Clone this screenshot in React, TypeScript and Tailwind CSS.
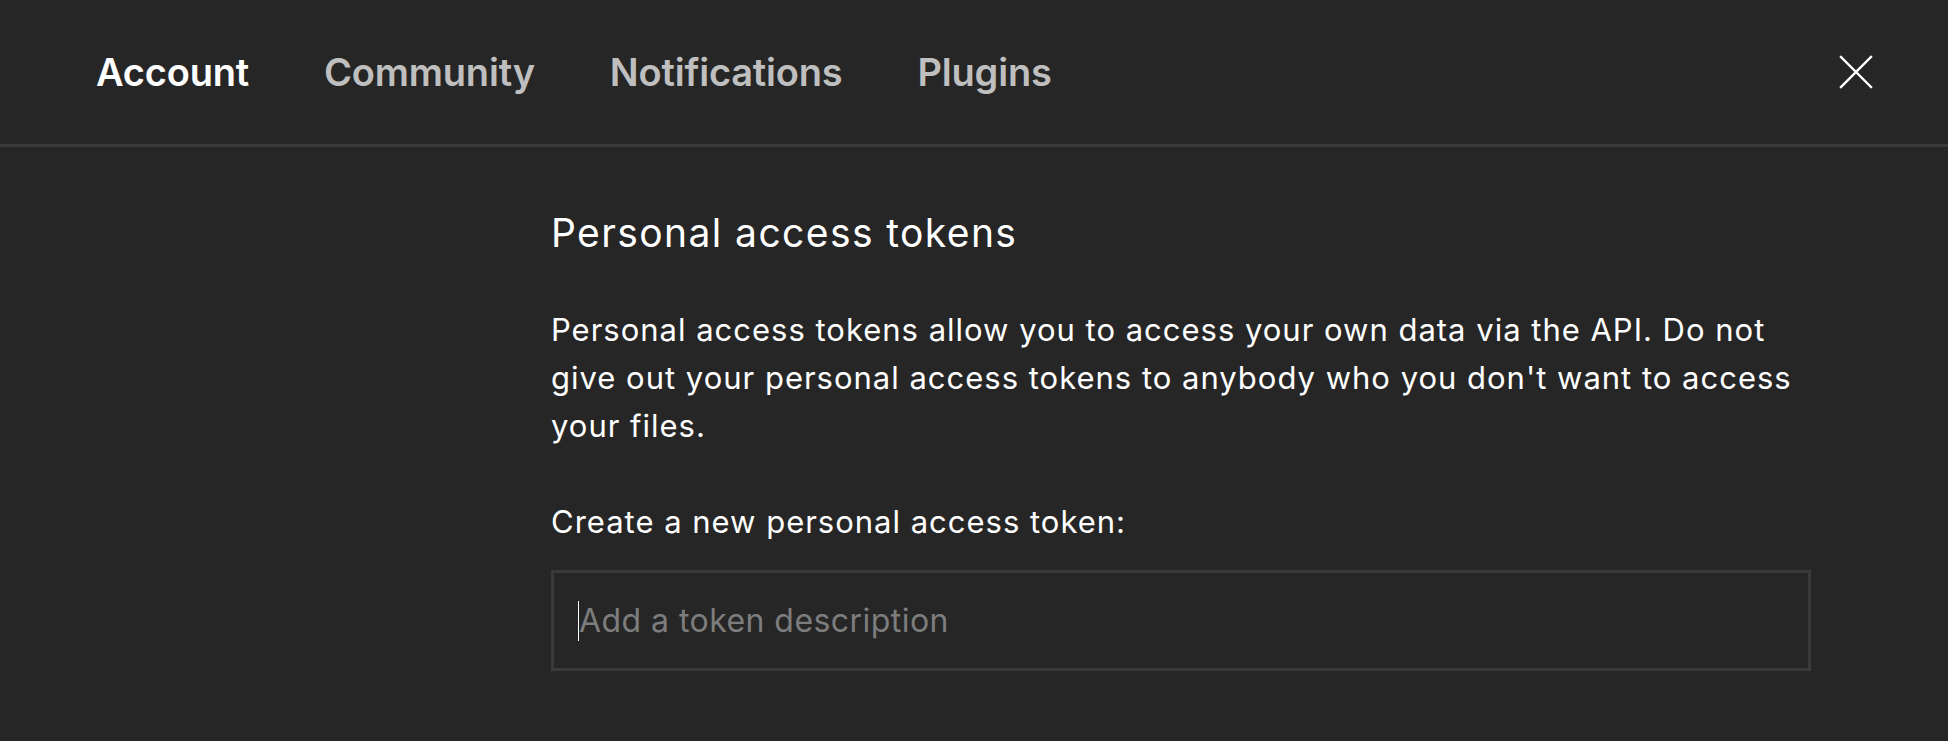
import React, { useState } from 'react';

const tabs = ['Account', 'Community', 'Notifications', 'Plugins'];

const CloseIcon = () => (
  <svg width="34" height="34" viewBox="0 0 34 34" fill="none" stroke="#ffffff" strokeWidth="2.4" strokeLinecap="square">
    <path d="M2 2 L32 32 M32 2 L2 32" />
  </svg>
);

export default function App() {
  const [active, setActive] = useState('Account');
  const [desc, setDesc] = useState('');

  return (
    <div className="min-h-[741px] w-full bg-[#262626] text-white font-['Inter','Noto_Sans',sans-serif]">
      <div className="flex h-[147px] items-center justify-between border-b-[3px] border-[#3a3a3a] pl-[96px] pr-[75px]">
        <div className="flex items-center gap-[75px]">
          {tabs.map((t) => (
            <button
              key={t}
              onClick={() => setActive(t)}
              className={
                'text-[38px] leading-[48px] font-semibold tracking-[-0.2px] ' +
                (active === t ? 'text-white' : 'text-[#bfbfbf]')
              }
            >
              {t}
            </button>
          ))}
        </div>
        <button className="flex h-[34px] w-[34px] items-center justify-center">
          <CloseIcon />
        </button>
      </div>

      <div className="pl-[551px] pt-[62px]">
        <div className="w-[1260px]">
          <h2 className="text-[39px] leading-[48px] font-normal tracking-[0.036em]">Personal access tokens</h2>
          <p className="mt-[49px] text-[31px] leading-[48px] tracking-[0.032em]">
            Personal access tokens allow you to access your own data via the API. Do not give out your personal access
            tokens to anybody who you don't want to access your files.
          </p>
          <p className="mt-[48px] text-[31px] leading-[48px] tracking-[0.032em]">Create a new personal access token:</p>
          <div className="relative mt-[24px]">
            <input
              value={desc}
              onChange={(e) => setDesc(e.target.value)}
              placeholder="Add a token description"
              className="h-[101px] w-full border-[3px] border-[#3a3a3a] bg-transparent pl-[25px] text-[32px] tracking-[0.014em] text-white caret-transparent outline-none placeholder:text-[#7d7d7d]"
            />
            {desc === '' && <span className="absolute left-[27px] top-[31px] h-[40px] w-[1px] bg-white" />}
          </div>
        </div>
      </div>
    </div>
  );
}
